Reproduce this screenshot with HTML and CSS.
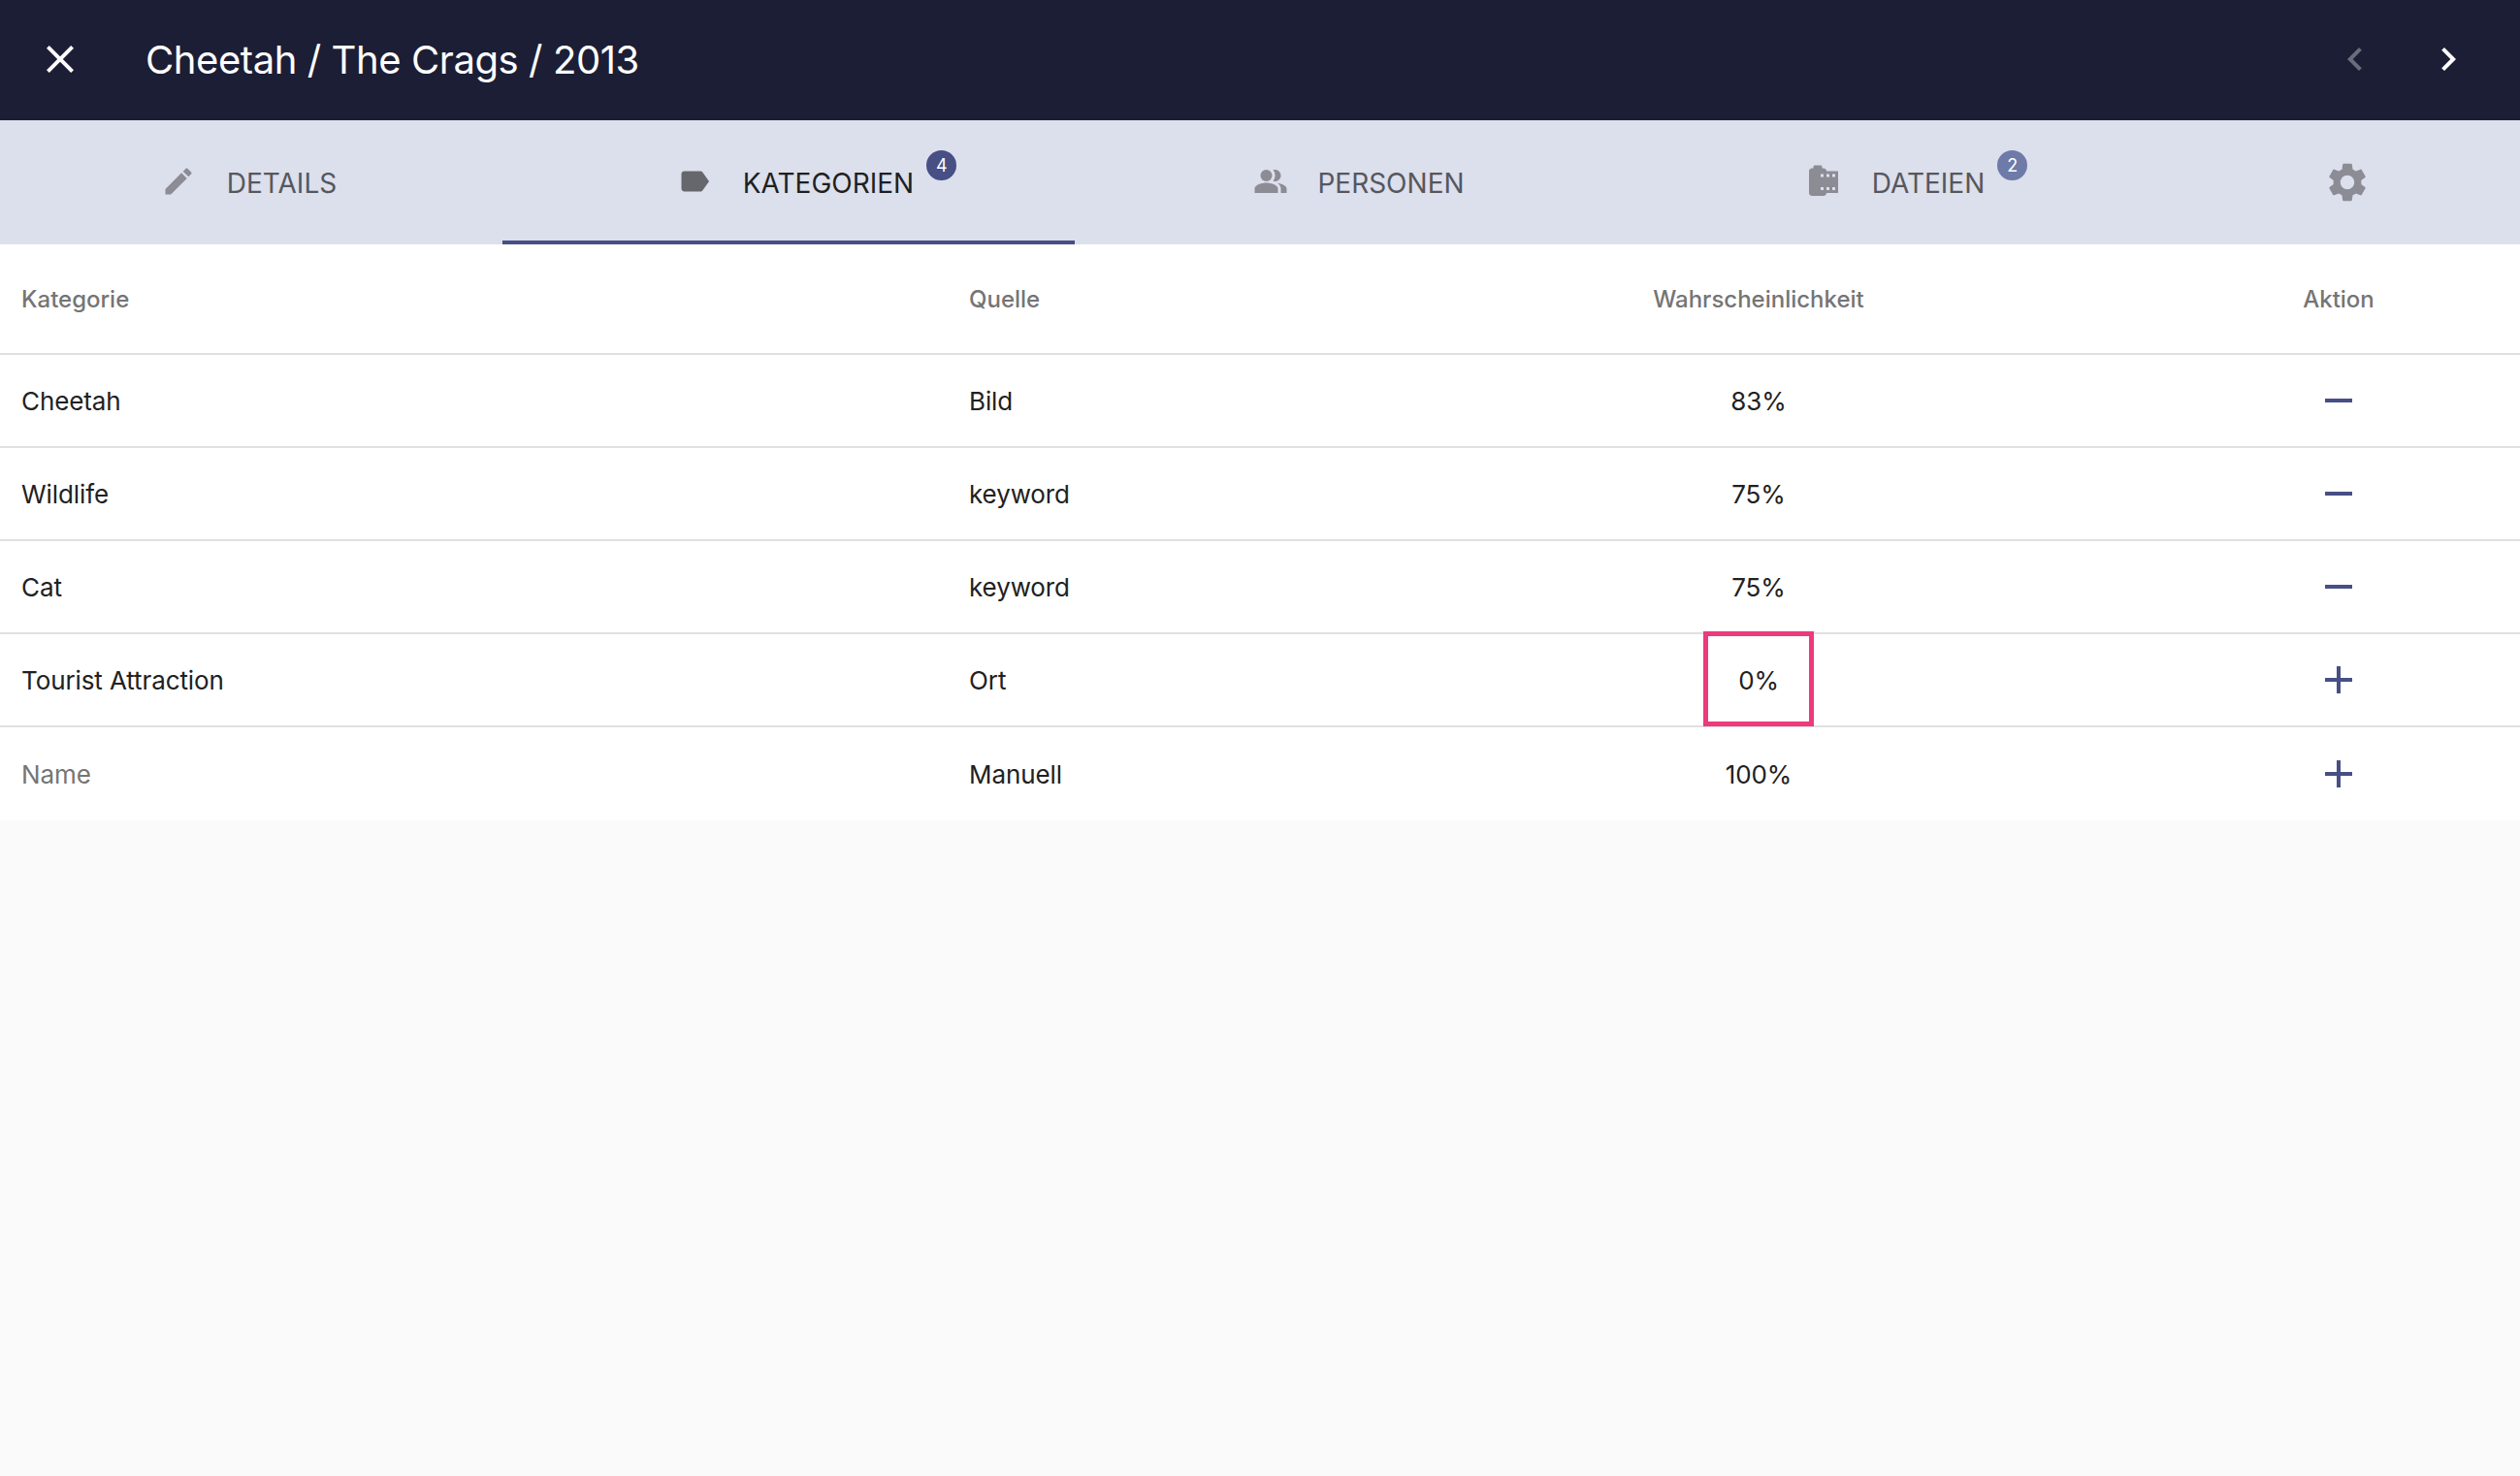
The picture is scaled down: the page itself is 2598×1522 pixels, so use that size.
FILE: index.html
```html
<!DOCTYPE html>
<html lang="de">

<head>
  <meta charset="UTF-8">
  <title>Cheetah / The Crags / 2013</title>
  <link rel="stylesheet" href="styles.css">
</head>
<body>
  <header class="topbar">
    <button class="icon-btn close-btn">
      <svg viewBox="0 0 24 24"><path d="M19 6.41L17.59 5 12 10.59 6.41 5 5 6.41 10.59 12 5 17.59 6.41 19 12 13.41 17.59 19 19 17.59 13.41 12z"/></svg>
    </button>
    <h1 class="title">Cheetah / The Crags / 2013</h1>
    <div class="pager">
      <button class="icon-btn is-disabled">
        <svg viewBox="0 0 24 24"><path d="M15.41 7.41L14 6l-6 6 6 6 1.41-1.41L10.83 12z"/></svg>
      </button>
      <button class="icon-btn">
        <svg viewBox="0 0 24 24"><path d="M10 6L8.59 7.41 13.17 12l-4.58 4.59L10 18l6-6z"/></svg>
      </button>
    </div>
  </header>

  <nav class="tabs">
    <a class="tab tab-details">
      <svg class="tab-icon" viewBox="0 0 24 24"><path d="M3 17.25V21h3.75L17.81 9.94l-3.75-3.75L3 17.25zM20.71 7.04c.39-.39.39-1.02 0-1.41l-2.34-2.34c-.39-.39-1.02-.39-1.41 0l-1.83 1.83 3.75 3.75 1.83-1.83z"/></svg>
      <span class="tab-label">Details</span>
    </a>
    <a class="tab tab-categories is-active">
      <svg class="tab-icon" viewBox="0 0 24 24"><path d="M17.63 5.84C17.27 5.33 16.67 5 16 5L5 5.01C3.9 5.01 3 5.9 3 7v10c0 1.1.9 1.99 2 1.99L16 19c.67 0 1.27-.33 1.63-.84L22 12l-4.37-6.16z"/></svg>
      <span class="tab-label">Kategorien<i class="badge">4</i></span>
    </a>
    <a class="tab tab-people">
      <svg class="tab-icon" viewBox="0 0 24 24"><path d="M16.67 13.13C18.04 14.06 19 15.32 19 17v3h4v-3c0-2.18-3.57-3.47-6.33-3.87z"/><circle cx="9" cy="8" r="4"/><path d="M15 12c2.21 0 4-1.79 4-4s-1.79-4-4-4c-.47 0-.91.1-1.33.24C14.5 5.27 15 6.58 15 8s-.5 2.73-1.33 3.76c.42.14.86.24 1.33.24zM9 13c-2.67 0-8 1.34-8 4v3h16v-3c0-2.66-5.33-4-8-4z"/></svg>
      <span class="tab-label">Personen</span>
    </a>
    <a class="tab tab-files">
      <svg class="tab-icon" viewBox="0 0 24 24"><path d="M14 5c0-1.1-.9-2-2-2h-1V2c0-.55-.45-1-1-1H6c-.55 0-1 .45-1 1v1H4c-1.1 0-2 .9-2 2v15c0 1.1.9 2 2 2h8c1.1 0 2-.9 2-2h8V5h-8zm-2 13h-2v-2h2v2zm0-9h-2V7h2v2zm4 9h-2v-2h2v2zm0-9h-2V7h2v2zm4 9h-2v-2h2v2zm0-9h-2V7h2v2z"/></svg>
      <span class="tab-label">Dateien<i class="badge badge-light">2</i></span>
    </a>
    <a class="tab tab-settings">
      <svg class="gear-icon" viewBox="0 0 24 24"><path d="M19.14 12.94c.04-.3.06-.61.06-.94 0-.32-.02-.64-.07-.94l2.03-1.58c.18-.14.23-.41.12-.61l-1.92-3.32c-.12-.22-.37-.29-.59-.22l-2.39.96c-.5-.38-1.03-.7-1.62-.94l-.36-2.54c-.04-.24-.24-.41-.48-.41h-3.84c-.24 0-.43.17-.47.41l-.36 2.54c-.59.24-1.13.57-1.62.94l-2.39-.96c-.22-.08-.47 0-.59.22L2.74 8.87c-.12.21-.08.47.12.61l2.03 1.58c-.05.3-.09.63-.09.94s.02.64.07.94l-2.03 1.58c-.18.14-.23.41-.12.61l1.92 3.32c.12.22.37.29.59.22l2.39-.96c.5.38 1.03.7 1.62.94l.36 2.54c.05.24.24.41.48.41h3.84c.24 0 .44-.17.47-.41l.36-2.54c.59-.24 1.13-.56 1.62-.94l2.39.96c.22.08.47 0 .59-.22l1.92-3.32c.12-.22.07-.47-.12-.61l-2.01-1.58zM12 15.6c-1.98 0-3.6-1.62-3.6-3.6s1.62-3.6 3.6-3.6 3.6 1.62 3.6 3.6-1.62 3.6-3.6 3.6z"/></svg>
    </a>
  </nav>

  <table class="cat-table">
    <colgroup>
      <col class="col-name">
      <col class="col-source">
      <col class="col-prob">
      <col class="col-action">
    </colgroup>
    <thead>
      <tr>
        <th>Kategorie</th>
        <th>Quelle</th>
        <th class="center">Wahrscheinlichkeit</th>
        <th class="center">Aktion</th>
      </tr>
    </thead>
    <tbody>
      <tr>
        <td>Cheetah</td>
        <td>Bild</td>
        <td class="center">83%</td>
        <td class="center"><svg class="action-icon" viewBox="0 0 24 24"><path d="M19 13H5v-2h14v2z"/></svg></td>
      </tr>
      <tr>
        <td>Wildlife</td>
        <td>keyword</td>
        <td class="center">75%</td>
        <td class="center"><svg class="action-icon" viewBox="0 0 24 24"><path d="M19 13H5v-2h14v2z"/></svg></td>
      </tr>
      <tr>
        <td>Cat</td>
        <td>keyword</td>
        <td class="center">75%</td>
        <td class="center"><svg class="action-icon" viewBox="0 0 24 24"><path d="M19 13H5v-2h14v2z"/></svg></td>
      </tr>
      <tr>
        <td>Tourist Attraction</td>
        <td>Ort</td>
        <td class="center has-mark">0%<span class="mark"></span></td>
        <td class="center"><svg class="action-icon" viewBox="0 0 24 24"><path d="M19 13h-6v6h-2v-6H5v-2h6V5h2v6h6v2z"/></svg></td>
      </tr>
      <tr>
        <td class="placeholder">Name</td>
        <td>Manuell</td>
        <td class="center">100%</td>
        <td class="center"><svg class="action-icon" viewBox="0 0 24 24"><path d="M19 13h-6v6h-2v-6H5v-2h6V5h2v6h6v2z"/></svg></td>
      </tr>
    </tbody>
  </table>
</body>

</html>
```

FILE: styles.css
```css
* {
  margin: 0;
  padding: 0;
  box-sizing: border-box;
}

html,
body {
  height: 100%;
}

body {
  background: #fafafa;
  font-family: Inter, "Liberation Sans", sans-serif;
  overflow: hidden;
}

/* top bar */
.topbar {
  height: 124px;
  background: #1b1e35;
  display: flex;
  align-items: center;
  padding: 0 50px 0 38px;
  color: #fff;
}

.icon-btn {
  width: 48px;
  height: 48px;
  border: 0;
  background: none;
  fill: #fff;
}

.icon-btn svg {
  display: block;
  width: 48px;
  height: 48px;
  margin-top: -2px;
}

.icon-btn.is-disabled {
  opacity: 0.35;
}

.title {
  margin: -2px 0 0 64px;
  font-size: 40px;
  font-weight: 400;
  letter-spacing: -0.42px;
  white-space: nowrap;
}

.pager {
  margin-left: auto;
  display: flex;
  gap: 48px;
}

/* tabs */
.tabs {
  height: 128px;
  background: #dcdfec;
  display: flex;
}

.tab {
  height: 128px;
  display: flex;
  align-items: center;
  justify-content: center;
  gap: 32px;
  padding-top: 3px;
  color: #56575d;
  fill: #8b8c94;
  font-size: 28px;
  text-transform: uppercase;
  border-bottom: 4px solid transparent;
}

.tab-details {
  width: 518px;
  padding-right: 5px;
}

.tab-categories {
  width: 590px;
  padding-left: 14px;
}

.tab-people {
  width: 586px;
  gap: 30px;
}

.tab-files {
  width: 548px;
  padding-right: 28px;
}

.tab-settings {
  width: 356px;
}

.tab.is-active {
  color: #1f1f22;
  fill: #66676d;
  border-bottom-color: #474f85;
}

.tab-icon {
  width: 36px;
  height: 36px;
  flex: none;
  margin-top: -1px;
}

.gear-icon {
  width: 48px;
  height: 48px;
}

.tab-label {
  position: relative;
  margin-top: 3px;
}

.badge {
  position: absolute;
  left: 100%;
  top: -17px;
  margin-left: 13px;
  width: 31px;
  height: 31px;
  border-radius: 50%;
  background: #474f85;
  color: #fff;
  font-size: 18px;
  font-style: normal;
  line-height: 31px;
  text-align: center;
}

.badge-light {
  margin-left: 13px;
  background: #6e7aa8;
}

/* table */
.cat-table {
  width: 100%;
  table-layout: fixed;
  border-collapse: separate;
  border-spacing: 0;
  background: #fff;
  font-size: 26px;
  color: #212121;
}

.col-name {
  width: 977px;
}

.col-source {
  width: 425px;
}

.col-prob {
  width: 822px;
}

.col-action {
  width: 374px;
}

th,
td {
  padding: 0 22px;
  text-align: left;
  border-bottom: 2px solid #e0e0e0;
}

th {
  height: 114px;
  font-size: 24px;
  font-weight: 500;
  color: #757575;
}

td {
  height: 96px;
  letter-spacing: -0.1px;
}

tbody tr:last-child td {
  border-bottom: 0;
}

th.center,
td.center {
  text-align: center;
}

.placeholder {
  color: #757575;
}

.action-icon {
  display: block;
  width: 48px;
  height: 48px;
  margin: 0 auto;
  fill: #474f85;
}

.has-mark {
  position: relative;
}

.mark {
  position: absolute;
  left: 354px;
  top: -3px;
  width: 114px;
  height: 98px;
  border: 5px solid #ec3a7c;
}
```
